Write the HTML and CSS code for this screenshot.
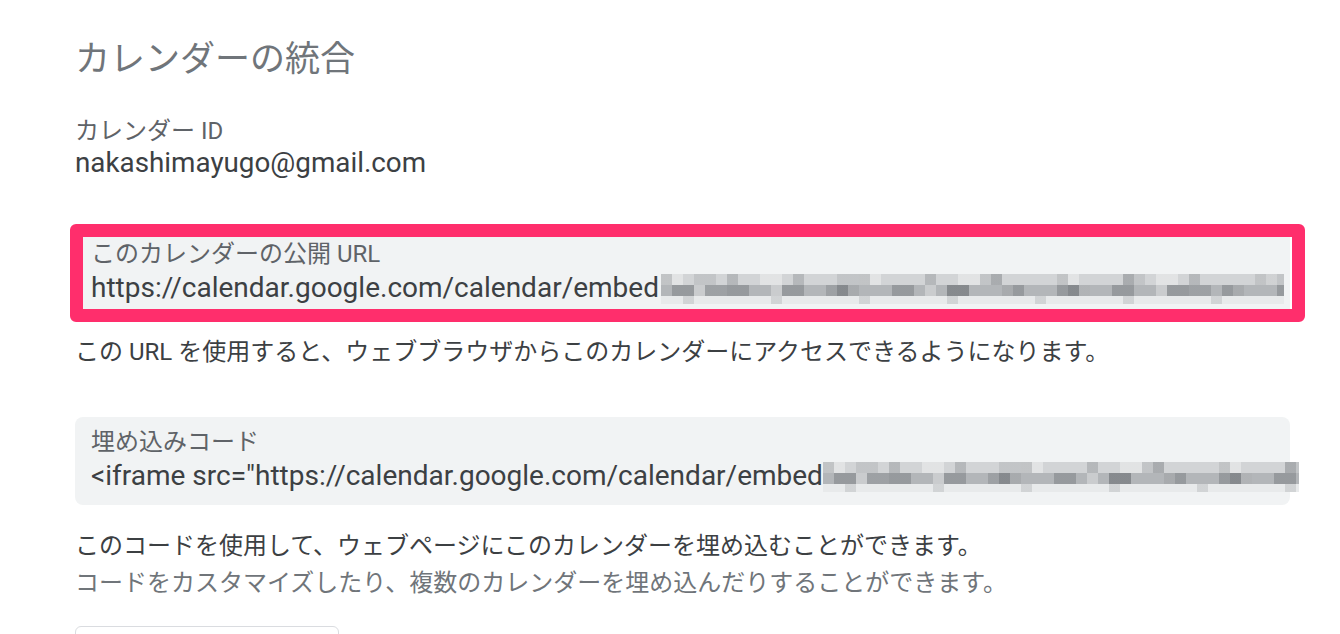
FILE: index.html
```html
<!DOCTYPE html>
<html lang="ja">
<head>
<meta charset="utf-8">
<title>カレンダーの統合</title>
<link rel="stylesheet" href="styles.css">
</head>
<body>
<main class="page">
  <h1 class="title">カレンダーの統合</h1>

  <section class="field">
    <div class="field-label">カレンダー ID</div>
    <div class="field-value">nakashimayugo@gmail.com</div>
  </section>

  <section class="box box-url">
    <div class="highlight"></div>
    <div class="box-label">このカレンダーの公開 URL</div>
    <div class="box-value"><span>https://calendar.google.com/calendar/embed</span><span class="mosaic mosaic-url"></span></div>
  </section>
  <p class="desc">この URL を使用すると、ウェブブラウザからこのカレンダーにアクセスできるようになります。</p>

  <section class="box box-embed">
    <div class="box-label">埋め込みコード</div>
    <div class="box-value"><span>&lt;iframe src="https://calendar.google.com/calendar/embed</span><span class="mosaic mosaic-embed"></span></div>
  </section>
  <p class="desc desc-first">このコードを使用して、ウェブページにこのカレンダーを埋め込むことができます。</p>
  <p class="desc desc-sub">コードをカスタマイズしたり、複数のカレンダーを埋め込んだりすることができます。</p>

  <div class="custom-btn"></div>
</main>
</body>
</html>
```

FILE: styles.css
```css
html, body {
  margin: 0;
  padding: 0;
  height: 634px;
  overflow: hidden;
  background: #ffffff;
}

body {
  font-family: Roboto, "Noto Sans CJK JP", sans-serif;
  color: #3c4043;
}

.page {
  padding: 36px 0 0 75px;
  width: 1215px;
}

.title {
  margin: 0;
  font-family: Roboto, "Noto Sans CJK JP", sans-serif;
  font-weight: 400;
  font-size: 35px;
  line-height: 48px;
  color: #70757a;
}

.field {
  margin-top: 32px;
}

.field-label {
  font-size: 24px;
  line-height: 30px;
  color: #5f6368;
}

.field-value {
  font-size: 27.8px;
  line-height: 34px;
  color: #3c4043;
}

.box {
  position: relative;
  background: #f1f3f4;
  border-radius: 8px;
  padding: 9px 0 0 16px;
  height: 79px;
}

.box-url {
  margin-top: 49px;
}

.highlight {
  position: absolute;
  left: -5px;
  right: -15px;
  top: -5px;
  bottom: -5px;
  border: 13px solid #ff2e6c;
  border-radius: 6px;
  pointer-events: none;
}

.box-label {
  font-size: 24px;
  line-height: 32px;
  color: #5f6368;
}

.box-value {
  display: flex;
  align-items: center;
  white-space: nowrap;
  font-size: 28px;
  line-height: 36px;
  color: #3c4043;
}

.mosaic {
  flex: none;
  height: 30px;
  margin-top: 2px;
  background:
    repeating-linear-gradient(90deg, rgba(80,85,90,.22) 0 11px, transparent 11px 66px) 0 0 / 100% 11px no-repeat,
    repeating-linear-gradient(90deg, transparent 0 33px, rgba(80,85,90,.12) 33px 55px, transparent 55px 143px) 0 0 / 100% 11px no-repeat,
    repeating-linear-gradient(90deg, rgba(255,255,255,.35) 0 22px, transparent 22px 99px) 0 0 / 100% 11px no-repeat,
    linear-gradient(#d2d4d6, #d2d4d6) 0 0 / 100% 11px no-repeat,
    repeating-linear-gradient(90deg, rgba(60,65,70,.24) 0 22px, transparent 22px 55px) 11px 11px / 100% 11px no-repeat,
    repeating-linear-gradient(90deg, transparent 0 44px, rgba(60,65,70,.18) 44px 66px, transparent 66px 121px) 0 11px / 100% 11px no-repeat,
    repeating-linear-gradient(90deg, rgba(255,255,255,.3) 0 11px, transparent 11px 77px) 33px 11px / 100% 11px no-repeat,
    linear-gradient(#b3b6b9, #b3b6b9) 0 11px / 100% 11px no-repeat,
    repeating-linear-gradient(90deg, rgba(80,85,90,.15) 0 11px, transparent 11px 88px) 22px 22px / 100% 8px no-repeat,
    linear-gradient(#e8eaeb, #e8eaeb) 0 22px / 100% 8px no-repeat,
    #f6f7f7;
}

.mosaic-url {
  width: 623px;
  margin-left: 2px;
}

.mosaic-embed {
  width: 476px;
  margin-left: 0;
}

.desc {
  margin: 0;
  font-size: 24px;
  line-height: 37px;
  color: #3c4043;
}

.box-url + .desc {
  margin-top: 17px;
}

.box-embed {
  margin-top: 46px;
}

.desc-first {
  margin-top: 23px;
}

.desc-sub {
  color: #70757a;
}

.custom-btn {
  margin-top: 24px;
  width: 264px;
  height: 40px;
  border: 1px solid #dadce0;
  border-radius: 6px;
  box-sizing: border-box;
}
```
